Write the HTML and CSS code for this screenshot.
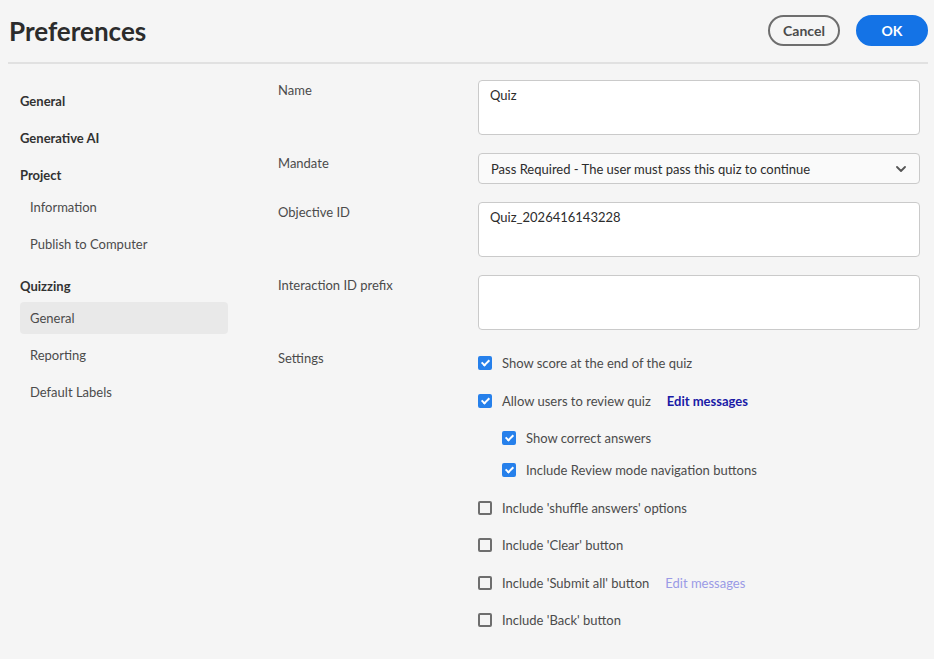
FILE: index.html
```html
<!DOCTYPE html>
<html lang="en">
<head>
  <meta charset="UTF-8">
  <title>Preferences</title>
  <link rel="stylesheet" href="styles.css">
</head>
<body>
  <div class="dialog">
    <header class="head">
      <h1>Preferences</h1>
      <div class="actions">
        <button class="btn btn-cancel">Cancel</button>
        <button class="btn btn-ok">OK</button>
      </div>
    </header>

    <div class="main">
      <nav class="side">
        <div class="grp">General</div>
        <div class="grp">Generative AI</div>
        <div class="grp">Project</div>
        <div class="sub">Information</div>
        <div class="sub">Publish to Computer</div>
        <div class="grp gap">Quizzing</div>
        <div class="sub active">General</div>
        <div class="sub">Reporting</div>
        <div class="sub">Default Labels</div>
      </nav>

      <form class="form">
        <div class="row">
          <label class="lbl">Name</label>
          <div class="field tall">Quiz</div>
        </div>
        <div class="row">
          <label class="lbl">Mandate</label>
          <div class="field select">
            <span>Pass Required - The user must pass this quiz to continue</span>
            <svg width="10" height="6" viewBox="0 0 10 6"><path d="M1 1l4 4 4-4" fill="none" stroke="#555" stroke-width="1.8" stroke-linecap="round" stroke-linejoin="round"/></svg>
          </div>
        </div>
        <div class="row">
          <label class="lbl">Objective ID</label>
          <div class="field tall">Quiz_2026416143228</div>
        </div>
        <div class="row">
          <label class="lbl">Interaction ID prefix</label>
          <div class="field tall"></div>
        </div>
        <div class="row">
          <label class="lbl">Settings</label>
          <div class="checks">
            <div class="chk"><span class="box on"></span>Show score at the end of the quiz</div>
            <div class="chk"><span class="box on"></span>Allow users to review quiz<a class="link">Edit messages</a></div>
            <div class="nested">
              <div class="chk"><span class="box on"></span>Show correct answers</div>
              <div class="chk"><span class="box on"></span>Include Review mode navigation buttons</div>
            </div>
            <div class="chk"><span class="box"></span>Include 'shuffle answers' options</div>
            <div class="chk"><span class="box"></span>Include 'Clear' button</div>
            <div class="chk"><span class="box"></span>Include 'Submit all' button<a class="link off">Edit messages</a></div>
            <div class="chk"><span class="box"></span>Include 'Back' button</div>
          </div>
        </div>
      </form>
    </div>
  </div>
</body>
</html>
```

FILE: styles.css
```css
body {
  margin: 0;
  background: #f5f5f5;
  font-family: Lato, "Liberation Sans", sans-serif;
  font-size: 13px;
  color: #4b4b4b;
}
.dialog {
  margin: 0 6px 0 8px;
}
.head {
  height: 62px;
  display: flex;
  align-items: center;
  justify-content: space-between;
  border-bottom: 2px solid #e1e1e1;
}
.head h1 {
  margin: 0;
  padding-left: 1px;
  font-size: 26px;
  font-weight: 700;
  color: #2c2c2c;
}
.actions {
  display: flex;
  gap: 16px;
  padding-bottom: 1px;
}
.btn {
  width: 72px;
  height: 31px;
  border-radius: 16px;
  font-family: inherit;
  font-size: 14px;
  font-weight: 700;
  cursor: pointer;
}
.btn-cancel {
  background: transparent;
  border: 2px solid #6e6e6e;
  color: #4b4b4b;
}
.btn-ok {
  background: #1473e6;
  border: 2px solid #1473e6;
  color: #fff;
}
.main {
  display: flex;
  gap: 50px;
}
.side {
  width: 208px;
  padding: 21px 0 0 12px;
  display: flex;
  flex-direction: column;
}
.grp, .sub {
  height: 32px;
  line-height: 32px;
  border-radius: 4px;
}
.grp {
  font-weight: 700;
  color: #323232;
  margin-bottom: 5px;
}
.grp + .sub {
  margin-top: -5px;
}
.sub {
  padding-left: 10px;
  margin-bottom: 5px;
  color: #4b4b4b;
}
.grp.gap {
  margin-top: 5px;
}
.sub.active {
  background: #e9e9e9;
}
.form {
  flex: 1;
  padding: 16px 8px 0 0;
  display: flex;
  flex-direction: column;
  gap: 18px;
}
.row {
  display: flex;
}
.lbl {
  width: 200px;
  flex-shrink: 0;
  line-height: 20px;
}
.field {
  flex: 1;
  box-sizing: border-box;
  background: #fff;
  border: 1px solid #cacaca;
  border-radius: 4px;
  color: #2c2c2c;
  padding: 6px 11px;
  line-height: 16px;
}
.field.tall {
  height: 55px;
}
.field.select {
  height: 31px;
  background: #fafafa;
  display: flex;
  align-items: center;
  justify-content: space-between;
  padding: 0 13px 0 12px;
}
.checks {
  display: flex;
  flex-direction: column;
  gap: 5.5px;
  margin-top: -1px;
}
.nested {
  padding-left: 24px;
}
.chk {
  height: 32px;
  display: flex;
  align-items: center;
  color: #4b4b4b;
}
.box {
  width: 14px;
  height: 14px;
  box-sizing: border-box;
  border: 2px solid #6e6e6e;
  border-radius: 2px;
  margin-right: 10px;
  position: relative;
}
.box.on {
  background: #2680eb;
  border-color: #2680eb;
}
.box.on::after {
  content: "";
  position: absolute;
  left: 3px;
  top: 0px;
  width: 3px;
  height: 6px;
  border: solid #fff;
  border-width: 0 2px 2px 0;
  transform: rotate(45deg);
}
.link {
  margin-left: 16px;
  font-weight: 700;
  color: #1a1aa6;
}
.link.off {
  font-weight: 400;
  color: #9a9ae6;
}
```
